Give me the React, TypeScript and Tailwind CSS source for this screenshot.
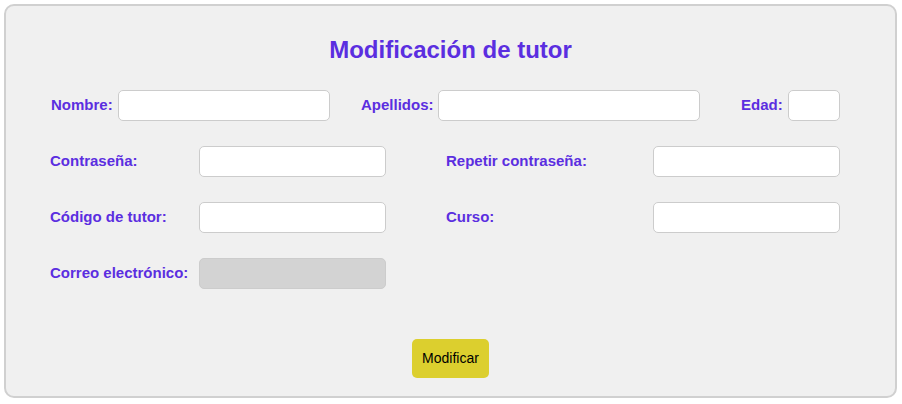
import React from "react";

const font = { fontFamily: '"Liberation Sans", Arial, sans-serif' };

function Field({ w, disabled }: { w: string; disabled?: boolean }) {
  return (
    <input
      type="text"
      disabled={disabled}
      className={`${w} h-[31px] rounded-[5px] border border-[#cccccc] ${
        disabled ? "bg-[#d3d3d3]" : "bg-white"
      } outline-none`}
    />
  );
}

function Label({ children, w = "" }: { children: React.ReactNode; w?: string }) {
  return (
    <label className={`${w} text-[15px] font-bold text-[#5b2ee0] whitespace-nowrap`}>
      {children}
    </label>
  );
}

export default function App() {
  return (
    <div className="w-[902px] h-[404px] bg-white p-[4px]" style={font}>
      <div className="h-[394px] w-[893px] rounded-[10px] border-2 border-[#d0d0d0] bg-[#f0f0f0] flex flex-col">
        <h1 className="mt-[27px] text-center text-[24px] font-bold text-[#5b2ee0] leading-[33px]">
          Modificación de tutor
        </h1>

        <form className="pl-[44px] pr-[55px] mt-[24px]">
          <div className="flex items-center h-[31px]">
            <div className="flex items-center gap-[6px] pl-[1px]">
              <Label w="w-[61px]">Nombre:</Label>
              <Field w="w-[212px]" />
            </div>
            <div className="flex items-center gap-[6px] ml-[31px]">
              <Label w="w-[71px]">Apellidos:</Label>
              <Field w="w-[262px]" />
            </div>
            <div className="flex items-center gap-[6px] ml-[41px]">
              <Label w="w-[41px]">Edad:</Label>
              <Field w="w-[52px]" />
            </div>
          </div>

          <div className="mt-[25px] grid grid-cols-[149px_187px_1fr_207px_187px] gap-y-[25px] items-center">
            <Label>Contraseña:</Label>
            <Field w="w-[187px]" />
            <div />
            <Label>Repetir contraseña:</Label>
            <Field w="w-[187px]" />

            <Label>Código de tutor:</Label>
            <Field w="w-[187px]" />
            <div />
            <Label>Curso:</Label>
            <Field w="w-[187px]" />

            <Label>Correo electrónico:</Label>
            <Field w="w-[187px]" disabled />
            <div />
            <div />
            <div />
          </div>
        </form>

        <div className="flex justify-center mt-[50px]">
          <button className="h-[39px] w-[77px] rounded-[5px] bg-[#dccf2e] text-[14px] text-black">
            Modificar
          </button>
        </div>
      </div>
    </div>
  );
}
